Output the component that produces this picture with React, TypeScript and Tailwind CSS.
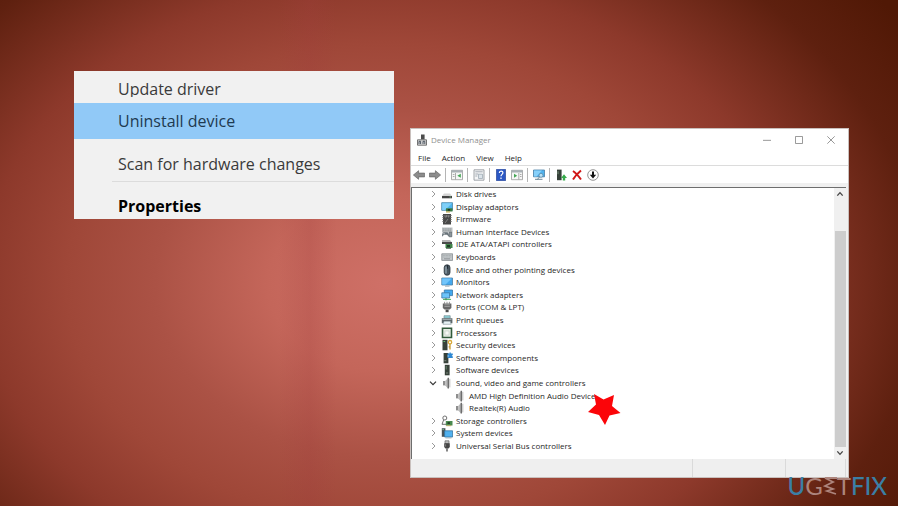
import { useState } from "react";
import type { ReactNode } from "react";
import clsx from "clsx";

type DeviceNode = {
  name: string;
  icon: ReactNode;
  children?: DeviceNode[];
  marked?: boolean;
};

function Glyph({ children, className = "size-3" }: { children: ReactNode; className?: string }) {
  return (
    <svg viewBox="0 0 12 12" className={clsx("shrink-0", className)} aria-hidden="true">
      {children}
    </svg>
  );
}

const diskIcon = (
  <Glyph>
    <path d="M3 5.5h6l2 2.5H1z" fill="#d5d5d5" />
    <path d="M1 8h10v2.3H1z" fill="#444" />
    <path d="M8.5 9h1.5" stroke="#7fc98a" strokeWidth=".8" />
  </Glyph>
);

const displayIcon = (
  <Glyph>
    <path d="M.7 1.7h10.8v7.6H.7z" fill="#4db3ec" stroke="#4a86a8" strokeWidth=".8" />
    <path d="M1.2 2.2h9.8L4 9H1.2z" fill="#7fd0f8" />
    <path d="M5 7.3h6.5v3.2H5z" fill="#3c7a42" />
    <path d="M6.8 8h2.3v1.7H6.8z" fill="#1f3524" />
    <path d="M5 10.5h4v1H5z" fill="#c9a544" />
  </Glyph>
);

const firmwareIcon = (
  <Glyph>
    <path d="M2 1h8v10.5H2z" fill="#484848" />
    <path d="M1.2 2.5h1.5M1.2 4.5h1.5M1.2 6.5h1.5M1.2 8.5h1.5M9.3 2.5h1.5M9.3 4.5h1.5M9.3 6.5h1.5M9.3 8.5h1.5" stroke="#777" strokeWidth=".8" />
    <path d="M4 2v2h1.5V2M7 2v2h1V2M4 10l3-4" stroke="#9a9a9a" strokeWidth=".7" fill="none" />
  </Glyph>
);

const hidIcon = (
  <Glyph>
    <path d="M1 1.5h10.5v5H1z" fill="#b8bdbf" />
    <path d="M2 3h8.5M2 4.7h8.5" stroke="#888e91" strokeWidth=".7" strokeDasharray="1.1 .6" />
    <path d="M1 10.8c0-3 .5-4.6 2-4.6h3c1.5 0 2 1.6 2 4.6L6 8.7H3z" fill="#68737a" />
    <path d="M8.2 6.2h2.6v4.6H8.2z" fill="#8b959b" stroke="#475057" strokeWidth=".6" />
    <path d="M3 7.2v1M2.5 7.7h1" stroke="#fff" strokeWidth=".5" />
  </Glyph>
);

const ideIcon = (
  <Glyph>
    <path d="M1 2h8l1.5 2H1z" fill="#b5b5b5" />
    <path d="M1 4h10v2H1z" fill="#4a4a4a" />
    <path d="M4.5 6h7v4h-7z" fill="#3f8249" />
    <path d="M6 7h3v2H6z" fill="#1e3a24" />
    <path d="M5 10.2h5" stroke="#1e3a24" strokeWidth=".9" />
  </Glyph>
);

const keyboardIcon = (
  <Glyph>
    <path d="M.8 2.8h10.8v6.6H.8z" fill="#c4c9cb" stroke="#83898d" strokeWidth=".8" />
    <path d="M1.8 4.5h9M1.8 6h9" stroke="#999fa3" strokeWidth=".7" strokeDasharray="1 .5" />
    <path d="M3 7.8h6" stroke="#83898d" strokeWidth=".8" />
  </Glyph>
);

const mouseIcon = (
  <Glyph>
    <rect x="3.2" y=".8" width="5.8" height="10.4" rx="2.8" fill="#4b5963" stroke="#2c363e" strokeWidth=".8" />
    <path d="M5 2.5v7" stroke="#b8c8d4" strokeWidth=".9" />
    <path d="M6.6 1.2v3.6" stroke="#111b22" strokeWidth=".8" />
  </Glyph>
);

const monitorIcon = (
  <Glyph>
    <path d="M.8 2h10.7v7H.8z" fill="#45a9ee" stroke="#4a7fa5" strokeWidth=".8" />
    <path d="M1.2 2.4h9.5L4.5 8.6H1.2z" fill="#72c5fb" />
    <path d="M4 10.2h4.5" stroke="#9aa9b3" strokeWidth=".9" />
  </Glyph>
);

const networkIcon = (
  <Glyph>
    <path d="M3.3 1h8.2v5.6H3.3z" fill="#43aaf0" stroke="#3b77a5" strokeWidth=".8" />
    <path d="M.8 3.8h7.8v5.2H.8z" fill="#6cc4fa" stroke="#3b77a5" strokeWidth=".8" />
    <path d="M2 10.4h8" stroke="#53b667" strokeWidth="1.1" />
    <path d="M5 9v2.3" stroke="#4e8a63" strokeWidth="1.2" />
  </Glyph>
);

const portIcon = (
  <Glyph>
    <path d="M3.6.8v2M6 .8v2M8.4.8v2" stroke="#8b8b8b" strokeWidth=".9" />
    <path d="M1.8 2.4h8.6V7L8.7 8.6H3.5L1.8 7z" fill="#686868" />
    <path d="M3.4 3.8h5.4M3.4 5.5h5.4" stroke="#a6a6a6" strokeWidth=".8" />
    <path d="M4.6 8.6h3v2.6h-3z" fill="#4a4a4a" />
  </Glyph>
);

const printerIcon = (
  <Glyph>
    <path d="M3 1.7h6.2v2.5H3z" fill="#8cd0d7" stroke="#6b8389" strokeWidth=".6" />
    <path d="M.8 4.2h10.6v5H9.2V7H3v2.2H.8z" fill="#5c666a" />
    <path d="M1.5 5.4h9" stroke="#c5ced1" strokeWidth=".7" />
    <path d="M3 7.5h6.2l1 2.8H2z" fill="#e7f2f4" stroke="#829398" strokeWidth=".6" />
  </Glyph>
);

const processorIcon = (
  <Glyph>
    <path d="M1.5 1.3h9v9.2h-9z" fill="#e6ece4" stroke="#325b3c" strokeWidth="1.6" />
    <path d="M4 4h4v4H4z" fill="#f6f8f5" stroke="#b7c6b9" strokeWidth=".5" />
  </Glyph>
);

const securityIcon = (
  <Glyph>
    <path d="M1.5.8h5v10.5h-5z" fill="#374139" />
    <path d="M2.4 2.5h1.8" stroke="#6dc47c" strokeWidth=".9" />
    <circle cx="9" cy="3.2" r="1.7" fill="none" stroke="#d8a93a" strokeWidth="1.3" />
    <path d="M9 5v5.5M9 7.8h-1.4" stroke="#c99a32" strokeWidth="1.3" />
  </Glyph>
);

const componentIcon = (
  <Glyph>
    <path d="M2.6 1h4.8v10.3H2.6z" fill="#374139" />
    <path d="M3.3 8.7h2" stroke="#7f8d82" strokeWidth=".9" />
    <path d="M6.5 1.5h2V.4h1.3v1.1h2v1.7h-.9v1h.9V6H6.5z" fill="#2d87d2" />
    <path d="M6.5 4h1.3" stroke="#fff" strokeWidth=".7" />
  </Glyph>
);

const softwareIcon = (
  <Glyph>
    <path d="M3.8.8h4.8v10.5H3.8z" fill="#374139" />
    <path d="M5.2 2v3.5" stroke="#6b8d73" strokeWidth=".9" />
    <path d="M5 9h2.2" stroke="#8b998e" strokeWidth=".8" />
  </Glyph>
);

const soundIcon = (
  <Glyph>
    <path d="M2 4h2.2v4.4H2z" fill="#8e8e8e" />
    <path d="M4.2 4 7 1v10.4L4.2 8.4z" fill="#b9b9b9" />
    <path d="M7.3.8v10.6" stroke="#5d5d5d" strokeWidth="1.2" />
    <path d="M8.8 1.8v8.6" stroke="#a8a8a8" strokeWidth=".8" />
  </Glyph>
);

const storageIcon = (
  <Glyph>
    <circle cx="3.8" cy="3" r="2" fill="none" stroke="#606060" strokeWidth=".9" />
    <path d="M2.7 4.8 1 9.3h4.3" fill="none" stroke="#606060" strokeWidth=".9" />
    <path d="M4.8 6h6.7v4.5H4.8z" fill="#4a8a4f" />
    <path d="M6.5 7.2h2.4v1.7H6.5z" fill="#1d3a23" />
    <path d="M5.2 10.7h5" stroke="#b9a14c" strokeWidth=".8" />
  </Glyph>
);

const systemIcon = (
  <Glyph>
    <path d="M.8 1.2h3.6v8.6H.8z" fill="#4a545a" />
    <path d="M1.4 2.6H3" stroke="#7bd08d" strokeWidth=".8" />
    <path d="M3.6 3.8h8v6.2h-8z" fill="#51b2f0" stroke="#33749f" strokeWidth=".8" />
    <path d="M4.5 11h6" stroke="#8fa4b0" strokeWidth=".7" />
  </Glyph>
);

const usbIcon = (
  <Glyph>
    <path d="M4 .8h4v2.7H4z" fill="#bdbdbd" stroke="#666" strokeWidth=".7" />
    <path d="M3.2 3.3h5.6V7L7.5 8.5h-3L3.2 7z" fill="#454545" />
    <path d="M6 8.4v3" stroke="#454545" strokeWidth="1.3" />
    <path d="M4.6 4.3v2.2" stroke="#999" strokeWidth=".7" />
  </Glyph>
);

const devices: DeviceNode[] = [
  { name: "Disk drives", icon: diskIcon },
  { name: "Display adaptors", icon: displayIcon },
  { name: "Firmware", icon: firmwareIcon },
  { name: "Human Interface Devices", icon: hidIcon },
  { name: "IDE ATA/ATAPI controllers", icon: ideIcon },
  { name: "Keyboards", icon: keyboardIcon },
  { name: "Mice and other pointing devices", icon: mouseIcon },
  { name: "Monitors", icon: monitorIcon },
  { name: "Network adapters", icon: networkIcon },
  { name: "Ports (COM & LPT)", icon: portIcon },
  { name: "Print queues", icon: printerIcon },
  { name: "Processors", icon: processorIcon },
  { name: "Security devices", icon: securityIcon },
  { name: "Software components", icon: componentIcon },
  { name: "Software devices", icon: softwareIcon },
  {
    name: "Sound, video and game controllers",
    icon: soundIcon,
    children: [
      { name: "AMD High Definition Audio Device", icon: soundIcon, marked: true },
      { name: "Realtek(R) Audio", icon: soundIcon },
    ],
  },
  { name: "Storage controllers", icon: storageIcon },
  { name: "System devices", icon: systemIcon },
  { name: "Universal Serial Bus controllers", icon: usbIcon },
];

function ContextMenu() {
  return (
    <div
      role="menu"
      className="mt-[71px] flex w-80 shrink-0 flex-col bg-[#f1f1f1] text-base text-[#3a3a3a]"
    >
      <button role="menuitem" className="flex h-8 items-start pl-11 text-left">
        <span className="block h-[26px] overflow-hidden leading-9">Update driver</span>
      </button>
      <button role="menuitem" className="h-9 bg-[#91c9f7] pl-11 text-left text-[#1f3a50]">
        Uninstall device
      </button>
      <button role="menuitem" className="h-[42px] pl-11 pt-2 text-left">
        Scan for hardware changes
      </button>
      <hr className="ml-[38px] border-t border-[#dcdcdc]" />
      <button role="menuitem" className="h-[37px] pl-11 pt-2.5 text-left font-bold text-black">
        Properties
      </button>
    </div>
  );
}

function TitleBar() {
  return (
    <header className="flex h-[22px] items-center pl-[5px] text-[#8f8f8f]">
      <Glyph>
        <path d="M5 .5h3.6v5H5z" fill="#4d4d4d" />
        <path d="M1.5 5.8h9v5.4h-9z" fill="#d8d8d8" stroke="#666" strokeWidth=".9" />
        <path d="M3 10V7.3h1.6V10M7 10V7.3h1.8V10" stroke="#3f4b57" strokeWidth=".9" fill="none" />
      </Glyph>
      <h1 className="ml-[3px] flex-1">Device Manager</h1>
      <button aria-label="Minimize" className="flex w-8 justify-center">
        <Glyph className="size-2">
          <path d="M0 6.5h12" stroke="#888" strokeWidth="1.3" />
        </Glyph>
      </button>
      <button aria-label="Maximize" className="flex w-8 justify-center">
        <Glyph className="size-2">
          <path d="M.7.7h10.6v10.6H.7z" fill="none" stroke="#888" strokeWidth="1.3" />
        </Glyph>
      </button>
      <button aria-label="Close" className="mr-px flex w-8 justify-center">
        <Glyph className="size-2">
          <path d="m.5.5 11 11m0-11-11 11" stroke="#888" strokeWidth="1.3" />
        </Glyph>
      </button>
    </header>
  );
}

function Divider() {
  return <span className="mx-0.5 h-3.5 w-0.5 border-l border-[#b5b5b5]" />;
}

function ToolButton({ label, children }: { label: string; children: ReactNode }) {
  return (
    <button aria-label={label} className="flex w-4 justify-center">
      <Glyph>{children}</Glyph>
    </button>
  );
}

function Toolbar() {
  return (
    <div className="flex h-[17px] items-center">
      <ToolButton label="Back">
        <path d="M.4 6 5.6 1.7v2.4h6v3.8h-6v2.4z" fill="#8c8c8c" stroke="#666" strokeWidth=".7" />
      </ToolButton>
      <ToolButton label="Forward">
        <path d="M11.6 6 6.4 1.7v2.4h-6v3.8h6v2.4z" fill="#8c8c8c" stroke="#666" strokeWidth=".7" />
      </ToolButton>
      <Divider />
      <ToolButton label="Show console tree">
        <path d="M.5 1.3h11v9.4H.5z" fill="#f6f6f6" stroke="#999" strokeWidth=".8" />
        <path d="M.5 1.2h11v2.3H.5z" fill="#a9b0b5" />
        <path d="M4.5 4v6.5M1.8 5.5h1.7M1.8 7.5h1.7" stroke="#999" strokeWidth=".8" />
        <path d="M9.8 4.8v4L6.3 6.8z" fill="#43a653" />
      </ToolButton>
      <Divider />
      <ToolButton label="Properties">
        <path d="M1 .8h10v10.4H1z" fill="#f4f5f6" stroke="#8c9196" strokeWidth=".8" />
        <path d="M2.3 2.8h7.4M2.3 5h3M2.3 7h2" stroke="#9aa3aa" strokeWidth=".9" />
        <path d="M5.5 5.2h4v4.3h-4z" fill="#dce4ea" stroke="#95a2ac" strokeWidth=".7" />
      </ToolButton>
      <Divider />
      <ToolButton label="Help">
        <path d="M1.5.3h9v11.4h-9z" fill="#2b58c5" stroke="#264397" strokeWidth=".7" />
        <path d="M4.3 4c0-2.5 3.6-2.4 3.6-.2C7.9 5.5 6 5.3 6 7.3M6 8.6v1.5" fill="none" stroke="#fff" strokeWidth="1.2" />
      </ToolButton>
      <ToolButton label="Show action pane">
        <path d="M.5 1.3h11v9.4H.5z" fill="#f6f6f6" stroke="#999" strokeWidth=".8" />
        <path d="M.5 1.2h11v2.3H.5z" fill="#a9b0b5" />
        <path d="M7.8 4v6.5M9 5.5h1.5M9 7.5h1.5" stroke="#999" strokeWidth=".8" />
        <path d="M3 4.8v4l3.2-2z" fill="#43a653" />
      </ToolButton>
      <Divider />
      <ToolButton label="Scan for hardware changes">
        <path d="M.5 1h11v6.8H.5z" fill="#4fb2ee" stroke="#4a7fa5" strokeWidth=".8" />
        <path d="M1 1.5h8L3.5 7.4H1z" fill="#86d0fa" />
        <circle cx="8" cy="6.3" r="2" fill="#b8e2f8" stroke="#51819e" strokeWidth=".7" />
        <path d="M6.5 8 4 10.8M2 10.3h7.5" stroke="#6b8798" strokeWidth="1" />
      </ToolButton>
      <Divider />
      <ToolButton label="Update driver">
        <path d="M2 .6h4.6v10.6H2z" fill="#374139" />
        <path d="M3 2.2v3" stroke="#8ba891" strokeWidth=".8" />
        <path d="M7.8 11.5V9H6l3-3.8L12 9h-1.8v2.5z" fill="#38ab4c" />
      </ToolButton>
      <ToolButton label="Uninstall device">
        <path d="M2 2c3 2 5.5 5 8 8.5M10 1.5C7 4 4 7 2 10.5" fill="none" stroke="#d01616" strokeWidth="2" />
      </ToolButton>
      <ToolButton label="Disable device">
        <circle cx="6" cy="6" r="5.3" fill="#fff" stroke="#777" strokeWidth=".8" />
        <path d="M6 2.5v4" stroke="#111" strokeWidth="2" />
        <path d="M2.8 5.7h6.4L6 9.4z" fill="#111" />
      </ToolButton>
    </div>
  );
}

function Star() {
  return (
    <svg viewBox="0 0 33 32" className="absolute -right-[26px] top-1 h-8 w-[33px]" aria-hidden="true">
      <path d="m6 0 9.5 5.5L26 1l-2 11 8.500 7-11 2.500L17 31l-6-10-11-3 8-7.500z" fill="#fb0509" />
    </svg>
  );
}

function DeviceRow({ node }: { node: DeviceNode }) {
  const [open, setOpen] = useState(true);
  const expanded = open && Boolean(node.children);

  return (
    <>
      <li className="flex h-3 items-center">
        <button
          aria-label={node.name}
          aria-expanded={expanded}
          onClick={() => setOpen(!open)}
          className="mr-0.5 flex size-3 items-center justify-center"
        >
          <Glyph className="size-2">
            {expanded ? (
              <path d="m1.5 4 4.5 4.5L10.5 4" fill="none" stroke="#333" strokeWidth="1.8" />
            ) : (
              <path d="M4.5 1.5 9 6l-4.5 4.5" fill="none" stroke="#999" strokeWidth="1.5" />
            )}
          </Glyph>
        </button>
        {node.icon}
        <span className="ml-[3px]">{node.name}</span>
      </li>
      {expanded &&
        node.children?.map((child) => (
          <li key={child.name} className="flex h-3 items-center pl-[27px]">
            {child.icon}
            <span className="relative ml-[3px]">
              {child.name}
              {child.marked && <Star />}
            </span>
          </li>
        ))}
    </>
  );
}

function ScrollBar() {
  return (
    <div className="flex w-3 flex-col items-center bg-[#f0f0f0]">
      <button aria-label="Scroll up" className="flex h-3 items-center">
        <Glyph className="size-2">
          <path d="M2 8.5 6 4l4 4.5" fill="none" stroke="#444" strokeWidth="2" />
        </Glyph>
      </button>
      <div className="mt-[31px] w-[11px] flex-1 bg-[#cdcdcd]" />
      <button aria-label="Scroll down" className="flex h-3 items-center">
        <Glyph className="size-2">
          <path d="M2 3.5 6 8l4-4.5" fill="none" stroke="#444" strokeWidth="2" />
        </Glyph>
      </button>
    </div>
  );
}

function DeviceManager() {
  return (
    <section className="mt-32 min-w-0 flex-1 border border-[#c9c0bd] bg-white text-[8px] leading-3 text-[#1f1f1f]">
      <TitleBar />
      <nav className="flex h-[15px] items-center gap-[11px] border-b border-[#dcdcdc] pl-[7px]">
        <button>File</button>
        <button>Action</button>
        <button>View</button>
        <button>Help</button>
      </nav>
      <Toolbar />
      <div className="bg-[#f0f0f0] pr-0.5 pt-1">
        <div className="flex border-l border-t border-[#6e6e6e] bg-white">
          <ul className="flex min-h-[271px] flex-1 flex-col justify-between pb-[7px] pl-[15px]">
            {devices.map((node) => (
              <DeviceRow key={node.name} node={node} />
            ))}
          </ul>
          <ScrollBar />
        </div>
      </div>
      <footer className="flex h-[18px] bg-[#efefef] pr-0.5">
        <span className="flex-1" />
        <span className="w-[93px] border-l border-[#dadada]" />
        <span className="w-[61px] border-x border-[#dadada]" />
      </footer>
    </section>
  );
}

function Logo() {
  return (
    <div className="absolute bottom-1.5 right-[11px] flex items-center font-['Lato',sans-serif] text-2xl leading-7 text-[#3b7fa5]">
      <span className="font-medium">U</span>
      <span className="text-[#ad857d]">G</span>
      <svg viewBox="0 0 14 18" className="h-[18px] w-3.5" role="img" aria-label="E">
        <path d="M14 1H2l8 4-8 4 8 3-6 2 9 3" fill="none" stroke="#ad857d" strokeWidth="1.8" />
      </svg>
      <span className="text-[#ad857d]">T</span>
      <span className="font-medium">FIX</span>
    </div>
  );
}

export default function App() {
  return (
    <main className="relative flex min-h-screen items-start gap-4 overflow-hidden bg-[linear-gradient(90deg,transparent_31%,rgba(160,60,60,0.22)_34.5%,transparent_37.5%),radial-gradient(66%_88%_at_43%_56%,#cf7067_0%,#c4665a_20%,#ab5245_39%,#9f4738_54%,#8d392b_68%,#5e200f_90%,#501805_105%)] pl-[74px] pr-[49px] font-['Open_Sans',sans-serif]">
      <ContextMenu />
      <DeviceManager />
      <Logo />
    </main>
  );
}
